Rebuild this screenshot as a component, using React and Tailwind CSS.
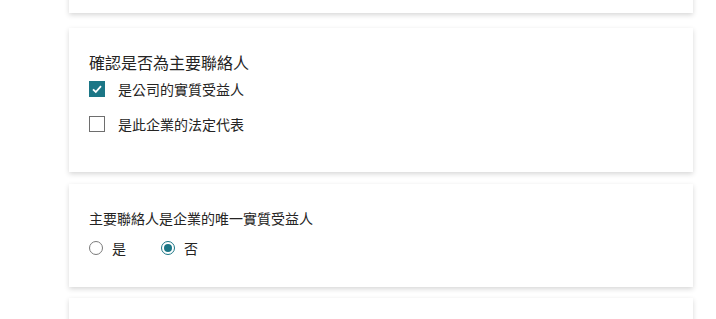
const font = { fontFamily: '"Noto Sans CJK TC", "Noto Sans", sans-serif' }

function Card({ className = '', children }) {
  return (
    <div className={`bg-white shadow-[0_2px_5px_rgba(0,0,0,0.16)] ${className}`}>
      {children}
    </div>
  )
}

function Checkbox({ checked, label }) {
  return (
    <label className="flex items-center gap-[13px] h-[16px]">
      {checked ? (
        <span className="w-[16px] h-[16px] bg-[#1b7686] flex items-center justify-center">
          <svg width="12" height="12" viewBox="0 0 12 12">
            <path d="M2 6.3 L4.8 9 L10 3.2" fill="none" stroke="#fff" strokeWidth="1.8" />
          </svg>
        </span>
      ) : (
        <span className="w-[16px] h-[16px] border border-[#6e6e6e] bg-white" />
      )}
      <span className="text-[14px] text-[#252423] leading-none">{label}</span>
    </label>
  )
}

function Radio({ checked, label }) {
  return (
    <label className="flex items-center gap-[9px]">
      <span
        className={`w-[14px] h-[14px] rounded-full border flex items-center justify-center ${
          checked ? 'border-[#1b7686]' : 'border-[#7a7a7a]'
        }`}
      >
        {checked && <span className="w-[8px] h-[8px] rounded-full bg-[#1b7686]" />}
      </span>
      <span className="text-[14px] text-[#252423] leading-none">{label}</span>
    </label>
  )
}

export default function App() {
  return (
    <div className="h-screen bg-white overflow-hidden" style={font}>
      <div className="ml-[69px] w-[624px] -mt-[50px] flex flex-col">
        <Card className="h-[63px]" />

        <Card className="mt-[15px] h-[144px] pl-[20px] pt-[24px]">
          <h2 className="text-[16px] leading-[20px] text-[#252423]">確認是否為主要聯絡人</h2>
          <div className="mt-[9px] flex flex-col gap-[19px]">
            <Checkbox checked label="是公司的實質受益人" />
            <Checkbox label="是此企業的法定代表" />
          </div>
        </Card>

        <Card className="mt-[12px] h-[103px] pl-[20px] pt-[25px]">
          <p className="text-[14px] leading-[18px] text-[#252423]">主要聯絡人是企業的唯一實質受益人</p>
          <div className="mt-[14px] flex items-center gap-[35px]">
            <Radio label="是" />
            <Radio checked label="否" />
          </div>
        </Card>

        <Card className="mt-[11px] h-[60px]" />
      </div>
    </div>
  )
}
